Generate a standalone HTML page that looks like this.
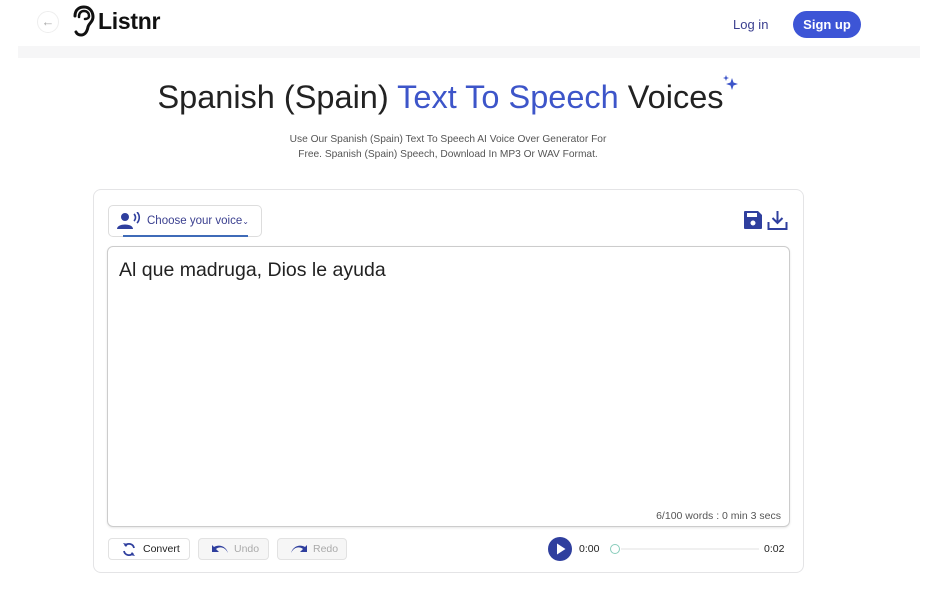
<!DOCTYPE html>
<html><head><meta charset="utf-8"><style>
*{box-sizing:border-box;margin:0;padding:0}
body{width:932px;height:590px;background:#fff;font-family:"Liberation Sans",sans-serif;position:relative;overflow:hidden;color:#222}
.abs{position:absolute}
.strip{left:18px;top:46px;width:902px;height:12px;background:#f6f6f7}
.back{left:37px;top:11px;width:22px;height:22px;border-radius:50%;border:1px solid #eee;color:#aaa;font-size:13px;text-align:center;line-height:20px}
.logo{left:98px;top:8px;font-size:23px;font-weight:bold;color:#111;letter-spacing:-0.3px}
.login{left:733px;top:17px;font-size:13px;color:#3a3f8f}
.signup{left:793px;top:11px;width:68px;height:27px;border-radius:14px;background:#3d55d6;color:#fff;font-size:13px;text-align:center;line-height:27px;font-weight:bold}
h1{position:absolute;left:0;width:881px;top:79px;text-align:center;font-size:32.5px;font-weight:normal;color:#222}
h1 span{color:#3d55c9}
.sub{left:0;width:896px;top:132px;text-align:center;font-size:10.2px;color:#555;line-height:15px}
.card{left:93px;top:189px;width:711px;height:384px;border:1px solid #e4e4e6;border-radius:8px}
.voice{left:108px;top:205px;width:154px;height:32px;border:1px solid #ddd;border-radius:5px;font-size:11.5px;color:#3a3f8f}
.ta{left:107px;top:246px;width:683px;height:281px;border:1px solid #ccc;border-radius:6px;box-shadow:0 1px 2px rgba(0,0,0,.1)}
.ta .t{position:absolute;left:11px;top:12px;font-size:19.5px;color:#222}
.ta .c{position:absolute;right:8px;bottom:4px;font-size:10.5px;color:#555}
.btn{top:538px;height:22px;border:1px solid #e2e2e2;border-radius:4px;font-size:10.5px;line-height:20px}
</style></head><body>
<div class="abs strip"></div>
<div class="abs back">←</div>
<svg class="abs" style="left:70px;top:5px" width="26" height="32" viewBox="0 0 26 32"><path d="M5 11 C5 4 10 2 14 2 C20 2 23 7 23 12 C23 17 19 18 18 22 C17 27 15 30 11 30 C9 30 7 29 6 27" fill="none" stroke="#111" stroke-width="3" stroke-linecap="round"/><path d="M9 12 C9 8 11 6 14 6 C17 6 19 8 19 11 C19 13 17 14 15 14" fill="none" stroke="#111" stroke-width="2.5" stroke-linecap="round"/></svg>
<div class="abs logo">Listnr</div>
<div class="abs login">Log in</div>
<div class="abs signup">Sign up</div>
<h1>Spanish (Spain) <span>Text To Speech</span> Voices</h1>
<svg class="abs" style="left:722px;top:74px" width="18" height="18" viewBox="0 0 18 18"><path d="M10 4 L11.5 8.5 L16 10 L11.5 11.5 L10 16 L8.5 11.5 L4 10 L8.5 8.5Z" fill="#3d55c9"/><path d="M4 1 L4.8 3.2 L7 4 L4.8 4.8 L4 7 L3.2 4.8 L1 4 L3.2 3.2Z" fill="#3d55c9"/></svg>
<div class="abs sub">Use Our Spanish (Spain) Text To Speech AI Voice Over Generator For<br>Free. Spanish (Spain) Speech, Download In MP3 Or WAV Format.</div>
<div class="abs card"></div>
<div class="abs voice">
<svg class="abs" style="left:8px;top:6px" width="24" height="18" viewBox="0 0 24 18"><circle cx="8" cy="5" r="4" fill="#2f3f9e"/><path d="M0 17 C0 11 16 11 16 17Z" fill="#2f3f9e"/><path d="M17 2 C19 4 19 7 17 9 M20 0 C23 3 23 8 20 11" stroke="#2f3f9e" stroke-width="1.6" fill="none"/></svg>
<span class="abs" style="left:38px;top:9px">Choose your voice<span style="font-size:8px">⌄</span></span>
<div class="abs" style="left:14px;top:29px;width:125px;height:1.5px;background:#3f6bb8"></div>
</div>
<svg class="abs" style="left:743px;top:210px" width="20" height="20" viewBox="0 0 20 20"><path d="M1 2 Q1 1 2 1 H15 L19 5 V18 Q19 19 18 19 H2 Q1 19 1 18Z" fill="#2f3f9e"/><rect x="4" y="3" width="10" height="4" fill="#fff"/><circle cx="10" cy="13" r="2.5" fill="#fff"/></svg>
<svg class="abs" style="left:767px;top:210px" width="21" height="21" viewBox="0 0 21 21"><path d="M10.5 1 V13 M5.5 8 L10.5 13 L15.5 8 M1.5 12 V19 H19.5 V12" stroke="#2f3f9e" stroke-width="2" fill="none"/></svg>
<div class="abs ta"><div class="t">Al que madruga, Dios le ayuda</div><div class="c">6/100 words : 0 min 3 secs</div></div>
<div class="abs btn" style="left:108px;width:82px;color:#222"><svg class="abs" style="left:13px;top:3px" width="14" height="15" viewBox="0 0 14 15"><path d="M3 4 A5 5 0 0 1 12 6 M11 11 A5 5 0 0 1 2 9" stroke="#2f3f9e" stroke-width="1.8" fill="none"/><path d="M1 1 L4 5 L6 2Z M13 14 L10 10 L8 13Z" fill="#2f3f9e"/></svg><span class="abs" style="left:34px">Convert</span></div>
<div class="abs btn" style="left:198px;width:71px;color:#aaa;background:#f6f6f6"><svg class="abs" style="left:11px;top:4px" width="20" height="12" viewBox="0 0 20 12"><path d="M2 2 V9 H9 L6 6 C10 3 15 4 18 10 C16 3 9 1 4 4Z" fill="#2f3f9e"/></svg><span class="abs" style="left:35px">Undo</span></div>
<div class="abs btn" style="left:277px;width:70px;color:#aaa;background:#f6f6f6"><svg class="abs" style="left:11px;top:4px" width="20" height="12" viewBox="0 0 20 12"><path d="M18 2 V9 H11 L14 6 C10 3 5 4 2 10 C4 3 11 1 16 4Z" fill="#2f3f9e"/></svg><span class="abs" style="left:35px">Redo</span></div>
<svg class="abs" style="left:548px;top:537px" width="24" height="24" viewBox="0 0 24 24"><circle cx="12" cy="12" r="12" fill="#2f3f9e"/><path d="M9 6.5 L17.5 12 L9 17.5Z" fill="#fff"/></svg>
<div class="abs" style="left:579px;top:543px;font-size:10.5px">0:00</div>
<div class="abs" style="left:610px;top:544px;width:10px;height:10px;border:1px solid #8cb;border-radius:50%;background:#fff"></div>
<div class="abs" style="left:621px;top:548px;width:138px;height:2px;background:#f0f0f0"></div>
<div class="abs" style="left:764px;top:543px;font-size:10.5px">0:02</div>
</body></html>
